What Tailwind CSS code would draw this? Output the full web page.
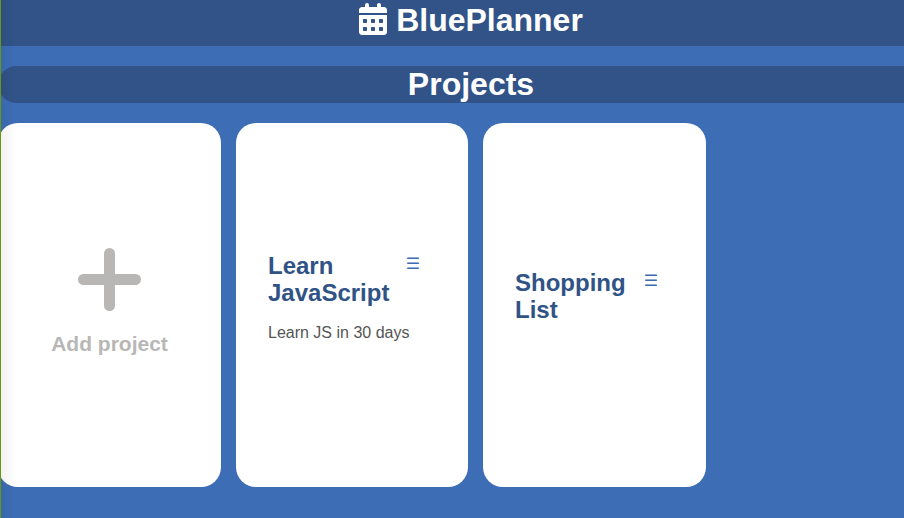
<!DOCTYPE html>
<html lang="en">
<head>
<meta charset="utf-8">
<title>BluePlanner</title>
<script src="https://cdn.jsdelivr.net/npm/@tailwindcss/browser@4"></script>
</head>
<body class="relative min-h-screen overflow-x-hidden bg-[#3d6db5] font-['Liberation_Sans',Arial,sans-serif]">
<header class="bg-[#315387] pb-1.5 pl-[38px] text-white">
  <h1 class="flex items-center justify-center gap-[9px] text-[32px] leading-10 font-bold">
    <svg class="mb-0.5 h-8 w-7" viewBox="0 0 448 512" fill="currentColor" aria-hidden="true"><path d="M128 0c17.700 0 32 14.300 32 32v32h128V32c0-17.700 14.300-32 32-32s32 14.300 32 32v32h48c26.500 0 48 21.500 48 48v48H0v-48c0-26.500 21.500-48 48-48h48V32c0-17.700 14.300-32 32-32zM0 192h448v272c0 26.500-21.500 48-48 48H48c-26.500 0-48-21.500-48-48V192zm64 80v32c0 8.800 7.200 16 16 16h32c8.800 0 16-7.200 16-16v-32c0-8.800-7.200-16-16-16H80c-8.800 0-16 7.200-16 16zm128 0v32c0 8.800 7.200 16 16 16h32c8.800 0 16-7.200 16-16v-32c0-8.800-7.200-16-16-16h-32c-8.800 0-16 7.200-16 16zm144-16c-8.800 0-16 7.200-16 16v32c0 8.800 7.200 16 16 16h32c8.800 0 16-7.200 16-16v-32c0-8.800-7.200-16-16-16h-32zM64 400v32c0 8.800 7.200 16 16 16h32c8.800 0 16-7.200 16-16v-32c0-8.800-7.200-16-16-16H80c-8.800 0-16 7.200-16 16zm144-16c-8.800 0-16 7.200-16 16v32c0 8.800 7.200 16 16 16h32c8.800 0 16-7.200 16-16v-32c0-8.800-7.200-16-16-16h-32zm112 16v32c0 8.800 7.200 16 16 16h32c8.800 0 16-7.200 16-16v-32c0-8.800-7.200-16-16-16h-32c-8.800 0-16 7.200-16 16z"/></svg>
    <span>BluePlanner</span>
  </h1>
</header>
<main class="-ml-0.5 pt-5 pb-7">
  <h2 class="rounded-l-[20px] bg-[#315387] pl-10 text-center text-[32px] leading-[37px] font-bold text-white">Projects</h2>
  <div class="mt-5 flex gap-[15px]">
    <button type="button" class="flex h-[364px] w-[223px] flex-col items-center justify-center gap-[21px] rounded-[20px] bg-white pb-1.5 text-[#b8b7b6]">
      <svg class="size-[63px]" viewBox="0 0 63 63" fill="none" stroke="currentColor" stroke-width="11" stroke-linecap="round" aria-hidden="true"><path d="M31.500 5.500v52M5.500 31.500h52"/></svg>
      <span class="text-[21px] leading-6 font-bold">Add project</span>
    </button>
    <article class="flex h-[364px] w-[232px] flex-col justify-center rounded-[20px] bg-white px-8">
      <div class="mb-[18px] flex items-start justify-between">
        <h3 class="text-2xl leading-[27px] font-bold text-[#305386]">Learn<br>JavaScript</h3>
        <button type="button" aria-label="Project menu" class="mr-4 font-['DejaVu_Sans',sans-serif] text-base leading-6 text-[#3d6db5]">☰</button>
      </div>
      <p class="mb-4 text-base leading-[18px] text-[#555555]">Learn JS in 30 days</p>
    </article>
    <article class="flex h-[364px] w-[223px] flex-col justify-center rounded-[20px] bg-white px-8">
      <div class="mb-[18px] flex items-start justify-between">
        <h3 class="text-2xl leading-[27px] font-bold text-[#305386]">Shopping<br>List</h3>
        <button type="button" aria-label="Project menu" class="mr-4 font-['DejaVu_Sans',sans-serif] text-base leading-6 text-[#3d6db5]">☰</button>
      </div>
    </article>
  </div>
</main>
<div class="pointer-events-none absolute inset-y-0 left-0 w-4 border-l border-[#669911] bg-linear-to-r from-black/5 to-transparent"></div>
</body>
</html>
